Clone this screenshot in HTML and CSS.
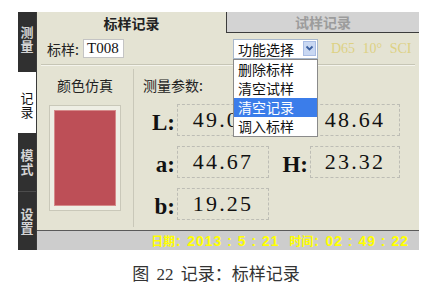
FILE: index.html
```html
<!DOCTYPE html>
<html lang="zh">
<head>
    <meta charset="UTF-8">
    <meta name="viewport" content="width=device-width, initial-scale=1.0">
    <title>标样记录</title>
    <link rel="stylesheet" href="styles.css">
</head>
<body>
    <div class="screen">
        <div class="sidebar">
            <div class="side-tab t1"><span>测</span><span>量</span></div>
            <div class="side-tab t2 active"><span>记</span><span>录</span></div>
            <div class="side-tab t3"><span>模</span><span>式</span></div>
            <div class="side-tab t4"><span>设</span><span>置</span></div>
        </div>
        <div class="main">
            <div class="tabs">
                <div class="tab active">标样记录</div>
                <div class="tab">试样记录</div>
            </div>
            <div class="toolbar">
                <span class="label">标样:</span>
                <span class="input">T008</span>
                <div class="select">
                    <span class="select-text">功能选择</span>
                    <span class="arrow">
                        <svg width="9" height="7" viewBox="0 0 9 7"><path d="M1.5 1.5 L4.5 4.5 L7.5 1.5" fill="none" stroke="#3b5f9e" stroke-width="1.8"/></svg>
                    </span>
                    <ul class="menu">
                        <li>删除标样</li>
                        <li>清空试样</li>
                        <li class="selected">清空记录</li>
                        <li>调入标样</li>
                    </ul>
                </div>
                <span class="light">D65 10° SCI</span>
            </div>
            <div class="content">
                <div class="color-col">
                    <div class="col-title">颜色仿真</div>
                    <div class="swatch-frame"><div class="swatch"></div></div>
                </div>
                <div class="params">
                    <div class="col-title">测量参数:</div>
                    <div class="grid">
                        <span class="key">L:</span><span class="val">49.06</span>
                        <span class="key">C:</span><span class="val">48.64</span>
                        <span class="key">a:</span><span class="val">44.67</span>
                        <span class="key">H:</span><span class="val">23.32</span>
                        <span class="key">b:</span><span class="val">19.25</span>
                    </div>
                </div>
            </div>
            <div class="status"><span class="cn">日期：</span>2013 : 5 : 21  <span class="cn">时间：</span>02 : 49 : 22</div>
        </div>
    </div>
    <p class="caption">图 22 记录：标样记录</p>
</body>
</html>
```

FILE: styles.css
```css
body {
    margin: 0;
    background: #ffffff;
    font-family: "Noto Sans CJK SC", sans-serif;
}
.screen {
    display: flex;
    width: 401px;
    height: 238px;
    margin: 12px 0 0 18px;
    background: #e4e3d3;
}

/* left side tabs */
.sidebar {
    width: 18px;
    display: flex;
    flex-direction: column;
    background: #303030;
}
.side-tab {
    display: flex;
    flex-direction: column;
    align-items: center;
    justify-content: center;
    color: #d4d4d4;
    font-size: 13px;
    font-weight: bold;
    box-sizing: border-box;
}
.side-tab span {
    display: block;
    height: 14px;
    line-height: 14px;
    overflow: visible;
}
.t1 { height: 60px; padding-bottom: 6px; }
.t2 { height: 61px; padding-top: 5px; }
.t3 { height: 59px; border-bottom: 1px solid #4c4c4c; }
.t4 { height: 58px; }
.side-tab.active {
    background: #ffffff;
    color: #111111;
    font-weight: normal;
}

.main {
    flex: 1;
    display: flex;
    flex-direction: column;
    border-left: 1px solid #3a3a3a;
    min-width: 0;
}

/* top tabs */
.tabs {
    display: flex;
    height: 21px;
}
.tab {
    display: flex;
    align-items: center;
    justify-content: center;
    font-size: 14px;
    font-weight: bold;
    color: #222222;
}
.tab.active {
    width: 189px;
}
.tab:not(.active) {
    flex: 1;
    background: #d3d3d3;
    color: #9c9c9c;
    border-left: 1px solid #3c3c3c;
    border-bottom: 1px solid #3c3c3c;
}

/* toolbar row */
.toolbar {
    display: flex;
    align-items: center;
    height: 31px;
    margin: 0 4px;
    padding-left: 6px;
    border-bottom: 1px solid #c6c5b5;
    box-shadow: 0 1px 0 #f4f4ec;
    font-size: 14px;
}
.label {
    width: 36px;
    color: #222222;
}
.input {
    box-sizing: border-box;
    width: 41px;
    height: 19px;
    line-height: 17px;
    padding-left: 3px;
    background: #ffffff;
    border: 1px solid #c4c4c4;
    font-family: "Liberation Serif", serif;
    font-size: 15px;
    color: #111111;
}
.select {
    position: relative;
    box-sizing: border-box;
    display: flex;
    align-items: center;
    width: 85px;
    height: 20px;
    margin-left: 109px;
    padding-left: 4px;
    background: #ffffff;
    border: 1px solid #a8b8cc;
}
.select-text {
    flex: 1;
    color: #111111;
    line-height: 18px;
}
.arrow {
    display: flex;
    align-items: center;
    justify-content: center;
    width: 13px;
    height: 15px;
    margin-right: 1px;
    background: #c9d8f2;
    border: 1px solid #a9bde4;
    box-sizing: border-box;
}
.menu {
    position: absolute;
    top: 19px;
    left: -1px;
    width: 85px;
    margin: 0;
    padding: 0;
    list-style: none;
    background: #ffffff;
    border: 1px solid #8a8a8a;
    box-sizing: border-box;
    z-index: 2;
}
.menu li {
    height: 19px;
    line-height: 19px;
    padding-left: 4px;
    color: #111111;
}
.menu li.selected {
    background: #3b7dea;
    color: #ffffff;
}
.light {
    margin-left: 13px;
    font-family: "Liberation Serif", serif;
    font-size: 14px;
    color: #ddd183;
    word-spacing: 4px;
}

/* content */
.content {
    flex: 1;
    display: flex;
}
.color-col {
    width: 96px;
    margin: 4px 0 3px;
    border-right: 1px solid #c9c8b9;
}
.col-title {
    padding-top: 8px;
    font-size: 14px;
    line-height: 16px;
    color: #222222;
}
.color-col .col-title {
    text-align: center;
}
.swatch-frame {
    box-sizing: border-box;
    width: 72px;
    height: 106px;
    margin: 12px 0 0 12px;
    padding: 4px;
    border: 1px solid #c9c8b9;
    background: #eeeee4;
}
.swatch {
    height: 100%;
    background: #bd4f57;
    border: 1px solid #d58a8a;
    box-sizing: border-box;
}
.params {
    flex: 1;
    margin-top: 4px;
    padding-left: 9px;
}
.grid {
    display: grid;
    grid-template-columns: 26px 92px 41px 90px;
    grid-auto-rows: 32px;
    row-gap: 10px;
    margin: 11px 0 0 8px;
}
.key {
    padding: 6px 2px 0 0;
    text-align: right;
    font-family: "Liberation Serif", serif;
    font-weight: bold;
    font-size: 23px;
    line-height: 26px;
    color: #111111;
}
.val {
    box-sizing: border-box;
    border: 1px dashed #bdbdb5;
    text-align: center;
    font-family: "Liberation Serif", serif;
    font-size: 22px;
    line-height: 30px;
    letter-spacing: 2.2px;
    color: #111111;
}

/* status bar */
.status {
    height: 19px;
    display: flex;
    align-items: center;
    justify-content: flex-end;
    padding-right: 10px;
    background: #cdcdcd;
    border-top: 1px solid #5a5a5a;
    font-family: "Liberation Sans", "Noto Sans CJK SC", sans-serif;
    font-weight: bold;
    font-size: 14px;
    letter-spacing: 1px;
    color: #ffff00;
    white-space: pre;
}
.status .cn {
    font-family: "Noto Sans CJK SC", sans-serif;
    font-size: 12px;
    letter-spacing: 0;
}

.caption {
    margin: 15px 0 0;
    text-align: center;
    font-family: "Liberation Serif", "Noto Sans CJK SC", serif;
    font-size: 17px;
    line-height: 20px;
    color: #333333;
    word-spacing: 3px;
}
```
